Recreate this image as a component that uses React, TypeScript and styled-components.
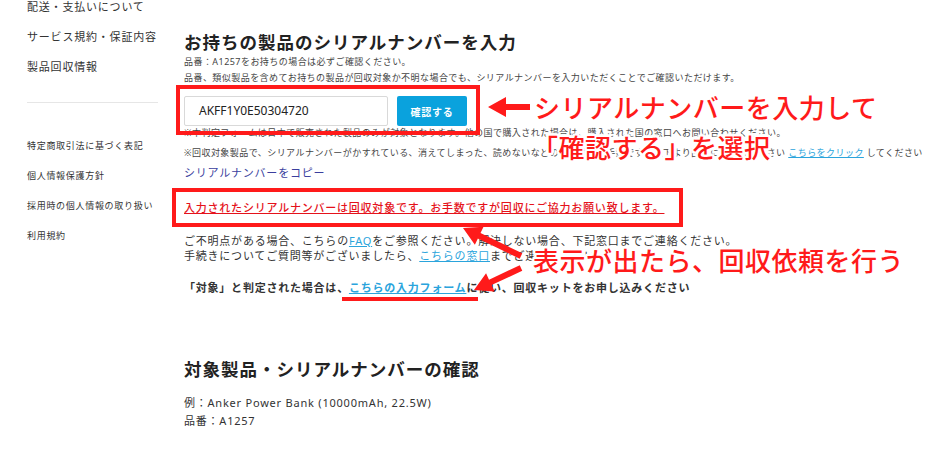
import React from 'react'
import styled, { createGlobalStyle } from 'styled-components'

const GlobalStyle = createGlobalStyle`
  html, body {
    margin: 0;
    padding: 0;
    background: #fff;
  }
  body {
    font-family: "Noto Sans", "Noto Sans CJK JP", sans-serif;
    color: #333;
  }
`

const Page = styled.div`
  position: relative;
  display: flex;
  width: 939px;
  height: 466px;
  overflow: hidden;
  background: #fff;
`

const Sidebar = styled.nav`
  flex-shrink: 0;
  width: 157px;
  padding-left: 27px;
`

const NavList = styled.ul<{ $small?: boolean }>`
  list-style: none;
  margin: ${({ $small }) => ($small ? '28px 0 0' : '-8px 0 0')};
  padding: 0;
  li {
    height: 30px;
    line-height: 30px;
    font-size: ${({ $small }) => ($small ? '9px' : '11px')};
    letter-spacing: ${({ $small }) => ($small ? '0.7px' : '0.8px')};
    color: #333;
    white-space: nowrap;
  }
`

const Divider = styled.hr`
  width: 131px;
  margin: 20px 0 0;
  border: none;
  border-top: 1px solid #e6e6e6;
`

const Main = styled.main`
  flex: 1;
  padding-top: 30px;
  white-space: nowrap;
`

const Heading = styled.h2<{ $gap?: number }>`
  margin: ${({ $gap }) => $gap ?? 0}px 0 0;
  font-size: 17.5px;
  line-height: 24px;
  font-weight: 700;
  letter-spacing: 1px;
  color: #222;
`

const Note = styled.p<{ $gap?: number; $lh?: number }>`
  margin: ${({ $gap }) => $gap ?? 0}px 0 0;
  font-size: 9px;
  line-height: ${({ $lh }) => $lh ?? 16}px;
  letter-spacing: 0.45px;
  color: #444;
`

const Body = styled.p<{ $gap?: number; $bold?: boolean; $lh?: number }>`
  margin: ${({ $gap }) => $gap ?? 0}px 0 0;
  font-size: 11px;
  line-height: ${({ $lh }) => $lh ?? 16}px;
  letter-spacing: 0.78px;
  font-weight: ${({ $bold }) => ($bold ? 700 : 400)};
  color: #333;
`

const Link = styled.a`
  color: #2aa4dc;
  text-decoration: underline;
`

const CopyLink = styled(Body)`
  color: #3b3f9e;
`

const Alert = styled(Body)`
  color: #e5121b;
  font-weight: 500;
  text-decoration: underline;
`

const SerialForm = styled.div`
  display: flex;
  gap: 9px;
  margin-top: 10px;
  height: 30px;
`

const SerialInput = styled.div`
  box-sizing: border-box;
  width: 204px;
  height: 30px;
  padding-left: 14px;
  border: 1px solid #d9d9d9;
  border-radius: 2px;
  font-size: 12px;
  line-height: 28px;
  color: #222;
`

const ConfirmButton = styled.button`
  width: 70px;
  height: 30px;
  border: none;
  border-radius: 2px;
  background: #0aa2dd;
  color: #fff;
  font-family: inherit;
  font-size: 10px;
  font-weight: 700;
  letter-spacing: 0.7px;
  padding: 0;
`

/* annotation overlay */
const RedBox = styled.div`
  position: absolute;
  box-sizing: border-box;
  border: 4px solid #ff1a1a;
  pointer-events: none;
`

const RedBar = styled.div`
  position: absolute;
  background: #ff1a1a;
`

const Callout = styled.div`
  position: absolute;
  font-family: "Noto Sans CJK JP", sans-serif;
  font-size: 26px;
  line-height: 30px;
  font-weight: 500;
  letter-spacing: 0.5px;
  color: #ff1a1a;
  white-space: nowrap;
  text-shadow: 2px 0 0 #fff, -2px 0 0 #fff, 0 2px 0 #fff, 0 -2px 0 #fff,
    2px 2px 0 #fff, -2px -2px 0 #fff, 2px -2px 0 #fff, -2px 2px 0 #fff,
    3px 0 1px #fff, -3px 0 1px #fff, 0 3px 1px #fff, 0 -3px 1px #fff;
`

const Overlay = styled.svg`
  position: absolute;
  left: 0;
  top: 0;
  pointer-events: none;
`

type ArrowProps = { tip: [number, number]; tail: [number, number] }

const Arrow: React.FC<ArrowProps> = ({ tip, tail }) => {
  const [tx, ty] = tip
  const dx = tail[0] - tx
  const dy = tail[1] - ty
  const len = Math.hypot(dx, dy)
  const ux = dx / len
  const uy = dy / len
  const nx = -uy
  const ny = ux
  const head = 18
  const hw = 10
  const sw = 3
  const bx = tx + ux * head
  const by = ty + uy * head
  const pts = [
    [tx, ty],
    [bx + nx * hw, by + ny * hw],
    [bx + nx * sw, by + ny * sw],
    [tail[0] + nx * sw, tail[1] + ny * sw],
    [tail[0] - nx * sw, tail[1] - ny * sw],
    [bx - nx * sw, by - ny * sw],
    [bx - nx * hw, by - ny * hw],
  ]
    .map((p) => p.join(','))
    .join(' ')
  return <polygon points={pts} fill="#ff1a1a" />
}

const App: React.FC = () => {
  return (
    <Page>
      <GlobalStyle />
      <Sidebar>
        <NavList>
          <li>配送・支払いについて</li>
          <li>サービス規約・保証内容</li>
          <li>製品回収情報</li>
        </NavList>
        <Divider />
        <NavList $small>
          <li>特定商取引法に基づく表記</li>
          <li>個人情報保護方針</li>
          <li>採用時の個人情報の取り扱い</li>
          <li>利用規約</li>
        </NavList>
      </Sidebar>
      <Main>
        <Heading>お持ちの製品のシリアルナンバーを入力</Heading>
        <Note>品番：A1257をお持ちの場合は必ずご確認ください。</Note>
        <Note>
          品番、類似製品を含めてお持ちの製品が回収対象か不明な場合でも、シリアルナンバーを入力いただくことでご確認いただけます。
        </Note>
        <SerialForm>
          <SerialInput>AKFF1Y0E50304720</SerialInput>
          <ConfirmButton>確認する</ConfirmButton>
        </SerialForm>
        <Note $lh={14}>
          ※本判定フォームは日本で販売された製品のみが対象となります。他の国で購入された場合は、購入された国の窓口へお問い合わせください。
        </Note>
        <Note $gap={6} $lh={14}>
          ※回収対象製品で、シリアルナンバーがかすれている、消えてしまった、読めないなどの場合は、お手数ですが以下より回収にご協力ください{' '}
          <Link>こちらをクリック</Link> してください
        </Note>
        <CopyLink $gap={5}>シリアルナンバーをコピー</CopyLink>
        <Alert $gap={19}>
          入力されたシリアルナンバーは回収対象です。お手数ですが回収にご協力お願い致します。
        </Alert>
        <Body $gap={17} $lh={15}>
          ご不明点がある場合、こちらの<Link>FAQ</Link>をご参照ください。解決しない場合、下記窓口までご連絡ください。
        </Body>
        <Body $lh={15}>
          手続きについてご質問等がございましたら、<Link>こちらの窓口</Link>までご連絡ください。
        </Body>
        <Body $gap={17} $bold>
          「対象」と判定された場合は、<Link>こちらの入力フォーム</Link>に従い、回収キットをお申し込みください
        </Body>
        <Heading $gap={61}>対象製品・シリアルナンバーの確認</Heading>
        <Body $gap={13} $lh={18}>
          例：Anker Power Bank (10000mAh, 22.5W)
        </Body>
        <Body $lh={18}>品番：A1257</Body>
      </Main>

      <RedBox style={{ left: 176, top: 85, width: 304, height: 50 }} />
      <RedBox style={{ left: 172, top: 188, width: 511, height: 39 }} />
      <RedBar style={{ left: 342, top: 297, width: 136, height: 4 }} />
      <Overlay width={939} height={466}>
        <Arrow tip={[488, 107]} tail={[530, 107]} />
        <Arrow tip={[463, 228]} tail={[521, 256]} />
        <Arrow tip={[474, 290]} tail={[521, 268]} />
      </Overlay>
      <Callout style={{ left: 534, top: 92 }}>シリアルナンバーを入力して</Callout>
      <Callout style={{ left: 532, top: 132 }}>「確認する」を選択</Callout>
      <Callout style={{ left: 533, top: 245 }}>表示が出たら、回収依頼を行う</Callout>
    </Page>
  )
}

export default App
